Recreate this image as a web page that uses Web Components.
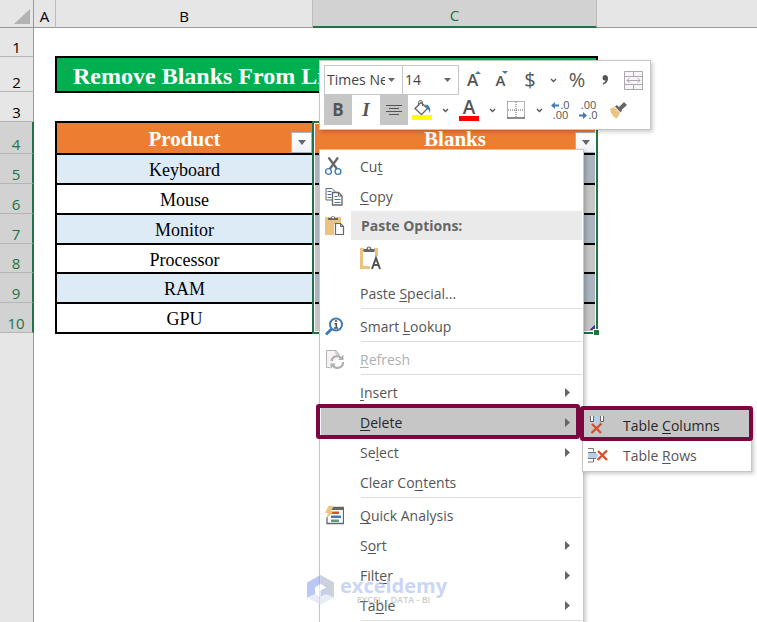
<!DOCTYPE html>
<html lang="en">
<head>
<meta charset="utf-8">
<title>Remove Blanks From List</title>
<style>
  html, body { height: 100%; margin: 0; }
  body { position: relative; overflow: hidden; background: #fff; color: #555; font: 14px/20px "Open Sans", "Noto Sans", sans-serif; }
  mini-toolbar { position: absolute; left: 319px; top: 60px; z-index: 3; }
  context-menu.main { position: absolute; left: 319px; top: 149px; width: 265px; z-index: 2; }
  context-menu.sub { position: absolute; left: 582px; top: 408px; width: 170px; z-index: 4; }
  focus-frame { position: absolute; z-index: 5; }
  focus-frame.one { left: 316px; top: 404px; width: 264px; height: 35px; }
  focus-frame.two { left: 580px; top: 406px; width: 173px; height: 35px; }
  brand-mark { position: absolute; left: 306px; top: 574px; z-index: 6; }
</style>
</head>
<body>
<sheet-grid></sheet-grid>
<mini-toolbar></mini-toolbar>

<context-menu class="main" label="Cell menu">
  <menu-item>
    <svg slot="icon" width="18" height="20" viewBox="0 0 18 20" fill="none"><path d="M3.5 1.5 12 13M13 1.500 4.800 13" stroke="#666" stroke-width="2.200"/><circle cx="3.500" cy="15.500" r="2.900" stroke="#3f7cb6" stroke-width="1.400"/><circle cx="13" cy="15.500" r="2.900" stroke="#3f7cb6" stroke-width="1.400"/></svg>
    Cu<u>t</u></menu-item>
  <menu-item>
    <svg slot="icon" width="18" height="19" viewBox="0 0 18 19" fill="none"><path d="M1 1.500h6l3 3V13H1z" fill="#fff" stroke="#666"/><path d="M2.500 4.500h4M2.500 7.500h4M2.500 10.500h4" stroke="#3f7cb6"/><path d="M7.500 5.500h6l3.500 3.500v9H7.500z" fill="#fff" stroke="#666" stroke-width="1.300"/><path d="M13.500 5.500V9H17" stroke="#666"/><path d="M9.500 9.500h3M9.500 12.500h6M9.500 15.500h6" stroke="#3f7cb6" stroke-width="1.200"/></svg>
    <u>C</u>opy</menu-item>
  <menu-item kind="heading">
    <svg slot="icon" width="20" height="21" viewBox="0 0 20 21"><path d="M0 2h16v7H9v11H0z" fill="#ecc481"/><path d="M3 5V3h3a2 2 0 0 1 4 0h3v2z" fill="#666"/><circle cx="8" cy="2.500" r="1" fill="#fff"/><path d="M10.500 8.500h5l3 3v8h-8z" fill="#fff" stroke="#666" stroke-width="1.200"/><path d="M15.500 8.500v3h3" fill="none" stroke="#666"/></svg>
    Paste Options:</menu-item>
  <menu-item kind="gallery" label="Keep text only">
    <svg width="22" height="24" viewBox="0 0 22 24"><path d="M10 21.500H1.500V3.500H4M14 3.500h2.500V10" fill="none" stroke="#ecc481" stroke-width="3"/><path d="M3.500 6V3h3a2.500 2.500 0 0 1 5 0h3v3z" fill="#666"/><circle cx="9" cy="2.500" r="1" fill="#fff"/><path d="m12 23 4-11 4 11M13.200 19h5.600" fill="none" stroke="#555" stroke-width="2"/></svg></menu-item>
  <menu-item>Paste <u>S</u>pecial...</menu-item>
  <menu-line></menu-line>
  <menu-item>
    <svg slot="icon" width="18" height="19" viewBox="0 0 18 19" fill="none"><circle cx="11" cy="7.500" r="6" stroke="#3f7cb6" stroke-width="2"/><path d="M6.500 12 1 17.500" stroke="#3f7cb6" stroke-width="3"/><path d="M11 3v2M9.500 6.700h1.800V11M9 11h4" stroke="#555" stroke-width="1.600"/></svg>
    Smart <u>L</u>ookup</menu-item>
  <menu-line></menu-line>
  <menu-item kind="disabled">
    <svg slot="icon" width="19" height="20" viewBox="0 0 19 20" fill="none"><path d="M5 18.500H1.500V1.500H11l3 3.500v2" fill="#f6f2f6" stroke="#b5b5b5"/><path d="M11 1.500V5h3" stroke="#b5b5b5"/><path d="M6.500 12a5.500 5.500 0 0 1 9.500-3M18 13a5.500 5.500 0 0 1-10 3.500" stroke="#b0b0b0" stroke-width="2.200"/><path d="M18.500 5.500v5.500H13zM5.500 20v-5.500H11z" fill="#b0b0b0"/></svg>
    <u>R</u>efresh</menu-item>
  <menu-line></menu-line>
  <menu-item arrow><u>I</u>nsert</menu-item>
  <menu-item arrow kind="active"><u>D</u>elete</menu-item>
  <menu-item arrow>Se<u>l</u>ect</menu-item>
  <menu-item>Clear Co<u>n</u>tents</menu-item>
  <menu-line></menu-line>
  <menu-item>
    <svg slot="icon" width="19" height="19" viewBox="0 0 19 19"><path d="M8 1.500h10.500v16H2V11" fill="#fff" stroke="#666" stroke-width="1.300"/><path d="M8 1h11v3H6z" fill="#666"/><path d="M7 5.500h7v2.500H6z" fill="#d24f2a"/><path d="M6 9.500h10v2.500H6z" fill="#3f7cb6"/><path d="M6 13.500h8V16H6z" fill="#5e9b84"/><path d="M3.500 0h5L6 5h3L1 13l2-6H0z" fill="#ecc481"/></svg>
    <u>Q</u>uick Analysis</menu-item>
  <menu-item arrow>S<u>o</u>rt</menu-item>
  <menu-item arrow>Filt<u>e</u>r</menu-item>
  <menu-item arrow>Ta<u>b</u>le</menu-item>
  <menu-line></menu-line>
</context-menu>

<context-menu class="sub" label="Delete">
  <menu-item kind="active">
    <svg slot="icon" width="18" height="20" viewBox="0 0 18 20"><path d="M6 1h5v9H6z" fill="#b9cfe8"/><path d="M2.500 1v5.500h3V1M12.500 1v5.500h3V1" fill="#fff" stroke="#666"/><path d="m4 9 9 9M13.500 8.500 3.500 18" stroke="#d94f2b" stroke-width="2.400"/></svg>
    Table <u>C</u>olumns</menu-item>
  <menu-item>
    <svg slot="icon" width="20" height="17" viewBox="0 0 20 17"><path d="M0 5.500h8l3 3-3 3H0z" fill="#b9cfe8"/><path d="M0 1.500h5.500v3M0 15h5.500v-3M0 5.500h8M0 11.500h8" fill="none" stroke="#777"/><path d="m10 4 9 9M19 3.500 9.500 13" stroke="#d94f2b" stroke-width="2.400"/></svg>
    Table <u>R</u>ows</menu-item>
</context-menu>

<focus-frame class="one"></focus-frame>
<focus-frame class="two"></focus-frame>
<brand-mark></brand-mark>

<script>
const define = (name, html, setup) => {
  const template = document.createElement('template');
  template.innerHTML = html;
  customElements.define(name, class extends HTMLElement {
    constructor() {
      super();
      this.attachShadow({ mode: 'open' }).append(template.content.cloneNode(true));
    }
    connectedCallback() { if (setup) setup(this, this.shadowRoot); }
  });
};

const products = ['Keyboard', 'Mouse', 'Monitor', 'Processor', 'RAM', 'GPU'];
const heights = [30, 30, 30, 29, 30, 30];

define('sheet-grid', `
<style>
  :host { display: block; height: 100%; color: #000; }
  table { width: 100%; height: 100%; table-layout: fixed; border-spacing: 0; }
  th, td { padding: 0; box-sizing: border-box; font-weight: 400; }
  thead th { height: 28px; background: #e6e6e6; border-bottom: 1px solid #999; border-right: 1px solid #bcbcbc; font-size: 15px; line-height: 20px; padding-top: 4px; }
  thead th:last-child { border-right: 0; }
  thead th.on { background: #d2d2d2; color: #217346; border-bottom: 2px solid #217346; }
  thead th.corner { padding: 0; border-right-color: #999; }
  .corner svg { display: block; margin: 5px 3px 0 auto; }
  tbody th { background: #e6e6e6; border-right: 1px solid #999; border-bottom: 1px solid #b5b5b5; font-size: 15px; line-height: 18px; vertical-align: bottom; }
  tbody th.on { background: #d2d2d2; color: #217346; border-right: 2px solid #217346; }
  tr.rest th { border-bottom: 0; }
  .box { box-shadow: 0 0 0 1px #000, inset 0 0 0 1px #000; position: relative; text-align: center; font: 18px/22px "Liberation Serif", serif; padding-top: 2px; }
  .title { background: #00b050; color: #fff; text-align: left; font-weight: 700; font-size: 24px; line-height: 28px; padding: 3px 0 0 17px; }
  .head { background: #ed7d31; color: #fff; font-size: 21px; font-weight: 700; line-height: 24px; }
  .active { z-index: 1; }
  .band { background: #ddebf7; }
  .dim { background: #c6c6c6; }
  .band.dim { background: #a9b4bf; }
  button { position: absolute; right: 1px; bottom: 1px; width: 21px; height: 21px; padding: 0; border: 1px solid #a9b3c0; background: linear-gradient(#fff, #eef2f7); display: grid; place-items: center; }
  .range { position: absolute; inset: -1px -1px auto -1px; height: 213px; box-sizing: border-box; border: 2px solid #217346; box-shadow: inset 0 0 0 1px #fff; pointer-events: none; }
  .range::after { content: ""; position: absolute; right: -3px; bottom: -3px; width: 5px; height: 5px; background: #217346; border: 1px solid #fff; border-width: 1px 0 0 1px; }
  .range::before { content: ""; position: absolute; right: 1px; bottom: 2px; width: 5px; height: 5px; background: linear-gradient(135deg, transparent 50%, #3f3f8f 50%); }
</style>
<table>
  <colgroup><col style="width:34px"><col style="width:22px"><col style="width:257px"><col style="width:284px"><col></colgroup>
  <thead><tr>
    <th class="corner"><svg width="16" height="16"><path d="M16 1v15H0z" fill="#b3b3b3"/></svg></th>
    <th>A</th><th>B</th><th class="on">C</th><th></th>
  </tr></thead>
  <tbody>
    <tr style="height:29px"><th>1</th><td></td><td></td><td></td><td></td></tr>
    <tr style="height:35px"><th>2</th><td></td><td class="box title" colspan="2">Remove Blanks From List</td><td></td></tr>
    <tr style="height:30px"><th>3</th><td></td><td></td><td></td><td></td></tr>
    <tr style="height:32px"><th class="on">4</th><td></td>
      <td class="box head">Product<button aria-label="Filter Product"><svg width="8" height="5"><path d="M0 0h8L4 5z" fill="#666"/></svg></button></td>
      <td class="box head active">Blanks<button aria-label="Filter Blanks"><svg width="8" height="5"><path d="M0 0h8L4 5z" fill="#666"/></svg></button><div class="range"></div></td><td></td></tr>
    ${products.map((p, i) => `<tr style="height:${heights[i]}px"><th class="on">${i + 5}</th><td></td><td class="box ${i % 2 ? '' : 'band'}">${p}</td><td class="box dim ${i % 2 ? '' : 'band'}"></td><td></td></tr>`).join('')}
    <tr class="rest"><th></th><td></td><td></td><td></td><td></td></tr>
  </tbody>
</table>`);

const chevron = '<button class="drop" aria-label="More"><svg width="7" height="5" fill="none"><path d="m1 1 2.500 2.500L6 1" stroke="#555" stroke-width="1.300"/></svg></button>';
const caret = '<svg width="7" height="4"><path d="M0 0h7L3.500 4z" fill="#666"/></svg>';

define('mini-toolbar', `
<style>
  :host { display: block; box-sizing: border-box; border: 1px solid #c6c6c6; background: #fff; padding: 4px 3px 4px 4px; box-shadow: 2px 2px 4px #0003; }
  .row { display: flex; height: 30px; }
  button { width: 28px; height: 30px; padding: 0; border: 0; background: none; color: #555; display: grid; place-items: center; font: 20px/24px "Open Sans", sans-serif; }
  .drop { width: 19px; }
  .on { background: #c6c6c6; }
  .combo { display: grid; grid-template-columns: 1fr 14px; align-items: center; border: 1px solid #c6c6c6; box-sizing: border-box; height: 30px; margin-right: -1px; }
  .combo.font { width: 79px; }
  .combo.size { width: 57px; margin-right: 1px; }
  select { appearance: none; min-width: 0; width: 100%; border: 0; padding: 0 3px 0 2px; background: none; color: #444; font: 14px/20px "Open Sans", sans-serif; }
  b.bold { font-size: 17px; }
  i { font: italic 700 19px/24px "Liberation Serif", serif; }
  .size-step { display: flex; justify-content: center; align-items: center; font-size: 17px; font-weight: 600; }
  .size-step.less { font-size: 15px; }
  .size-step svg { align-self: flex-start; margin: 6px 0 0 -3px; }
  .font-color { font-size: 19px; font-weight: 600; line-height: 17px; align-content: center; }
  .decimals { display: block; font-size: 11px; line-height: 10px; text-align: right; padding-right: 5px; }
  .decimals span { display: flex; justify-content: flex-end; align-items: center; gap: 1px; }
  svg { display: block; }
</style>
<div class="row">
  <label class="combo font"><select aria-label="Font"><option>Times New Roman</option></select>${caret}</label>
  <label class="combo size"><select aria-label="Font size"><option>14</option></select>${caret}</label>
  <button class="size-step" aria-label="Increase font size">A<svg width="6" height="3"><path d="M0 3h6L3 0z" fill="#3f7cb6"/></svg></button>
  <button class="size-step less" aria-label="Decrease font size">A<svg width="6" height="3"><path d="M0 0h6L3 3z" fill="#3f7cb6"/></svg></button>
  <button aria-label="Currency">$</button>${chevron}
  <button aria-label="Percent">%</button>
  <button aria-label="Comma style"><svg width="8" height="10"><path d="M4 0C6 0 7 1.500 7 3.500 7 6.500 5 9 2 9.500V8c1.500-.5 2.500-1.500 2.500-2.500C2.500 6 1.500 4.500 1.500 3S2.500 0 4 0z" fill="#555"/></svg></button>
  <button aria-label="Merge and center"><svg width="19" height="19" fill="none" stroke="#aaa"><path d="M.5.5h18v18H.5zM.5 5.500h18M.5 13.500h18M9.500.5v5M9.500 13.500v5" fill="#f8f4f8"/><path d="M3 9.500h13M5.500 7 3 9.500 5.500 12M13.500 7 16 9.500 13.500 12"/></svg></button>
</div>
<div class="row">
  <button class="on" aria-label="Bold"><b class="bold">B</b></button>
  <button aria-label="Italic"><i>I</i></button>
  <button class="on" aria-label="Center"><svg width="16" height="12" stroke="#555"><path d="M0 1.500h16M3 4.500h10M0 7.500h16M3 10.500h10"/></svg></button>
  <button aria-label="Fill color"><svg width="20" height="20" fill="none"><path d="m3 8.500 6-6 6.500 6-6 6z" fill="#fff" stroke="#666" stroke-width="1.300"/><path d="M6.500 6V2.500a2 2 0 0 1 4 0V6" stroke="#666"/><path d="M13 4.500c4 0 6 3 5 9-1-3-1.500-4-3-5z" fill="#3f7cb6"/><path d="M0 15h20v5H0z" fill="#ff0"/></svg></button>${chevron}
  <button class="font-color" aria-label="Font color">A<svg width="20" height="5"><path d="M0 0h20v5H0z" fill="red"/></svg></button>${chevron}
  <button aria-label="Borders"><svg width="18" height="18" fill="none" stroke="#666"><path d="M.5.5h17v17M.5.5v17M9 1v16M1 9h16" stroke-dasharray="1 1"/><path d="M0 17h18" stroke-width="1.500"/></svg></button>${chevron}
  <button class="decimals" aria-label="Increase decimal"><span><svg width="8" height="7"><path d="M0 3.500 4 0v2.500h4v2H4V7z" fill="#3f7cb6"/></svg>.0</span><span>.00</span></button>
  <button class="decimals" aria-label="Decrease decimal"><span>.00</span><span><svg width="8" height="7"><path d="M8 3.500 4 0v2.500H0v2h4V7z" fill="#3f7cb6"/></svg>.0</span></button>
  <button aria-label="Format painter"><svg width="18" height="17"><path d="m0 7 4-2 6 6-3 5.500C3.500 15.500 1 12 0 7z" fill="#ecc481"/><path d="m5 4.500 2-1.500L12 8.500l-1.500 2zM8.500 5.500 14 0l3 3-5.500 5z" fill="#666"/></svg></button>
</div>`);

define('context-menu', `
<style>
  :host { display: block; box-sizing: border-box; background: #fff; border: 1px solid #c6c6c6; padding: 1px; box-shadow: 2px 2px 4px #0003; }
</style>
<div role="menu"><slot></slot></div>`, (host, root) => root.querySelector('div').setAttribute('aria-label', host.getAttribute('label')));

define('menu-item', `
<style>
  :host { display: block; }
  button { display: flex; align-items: center; width: 100%; height: 30px; padding: 0; border: 0; background: none; color: #555; font: 14px/20px "Open Sans", "Noto Sans", sans-serif; text-align: left; }
  .icon { flex: none; width: 34px; margin-right: 5px; padding-left: 4px; box-sizing: border-box; display: grid; }
  .text { flex: 1; padding-top: 2px; }
  .arrow { display: none; margin-right: 12px; }
  :host([arrow]) .arrow { display: block; }
  :host([kind=active]) button { background: #c6c6c6; color: #262626; }
  :host([kind=disabled]) button { color: #b1b1b1; }
  :host([kind=heading]) button { height: 29px; color: #666; font-weight: 700; }
  :host([kind=heading]) .icon { width: 30px; margin: 0; }
  :host([kind=heading]) .text { background: #eaeaea; padding: 0 0 0 10px; line-height: 29px; }
  :host([kind=gallery]) button { height: 38px; }
  ::slotted(u) { text-underline-offset: 2px; }
</style>
<button role="menuitem"><span class="icon"><slot name="icon"></slot></span><span class="text"><slot></slot></span>
<svg class="arrow" width="5" height="9"><path d="M0 0v9l5-4.500z" fill="#666"/></svg></button>`, (host, root) => {
  if (host.hasAttribute('label')) root.querySelector('button').setAttribute('aria-label', host.getAttribute('label'));
});

define('menu-line', `
<style>
  :host { display: block; height: 3px; }
  hr { margin: 0 0 0 40px; border: 0; height: 1px; background: #dcdfe2; }
</style><hr>`);

define('focus-frame', `
<style>:host { display: block; box-sizing: border-box; border: 4px solid #7b0740; border-radius: 3px; pointer-events: none; }</style>`);

define('brand-mark', `
<style>
  :host { display: flex; align-items: center; gap: 5px; opacity: .6; pointer-events: none; }
  .name { display: block; color: #a9baf0; font: 700 20px/20px "Open Sans", sans-serif; }
  .tag { display: block; color: #aaa; font: 600 9px/8px "Open Sans", sans-serif; text-align: center; }
</style>
<svg width="29" height="32" viewBox="0 0 29 32"><path d="M14.500 1 28 8.500v15L14.500 31 1 23.500v-15z" fill="#dbe2f2"/><path d="M14.500 1v9L9 13.500V20l-8 3.500v-15z" fill="#8fa5ee"/><path d="M14.500 1 28 8.500v15L20 20v-6.500L14.500 10z" fill="#aab4c8"/><path d="m14.500 10 5.500 3.500V20l-5.500 3L9 20v-6.500z" fill="#fff"/><path d="m14.500 16.500 5.500-3V20l-5.500 3z" fill="#9fb2e8"/></svg>
<span><span class="name">exceldemy</span><span class="tag">EXCEL - DATA - BI</span></span>`);
</script>
</body>
</html>
